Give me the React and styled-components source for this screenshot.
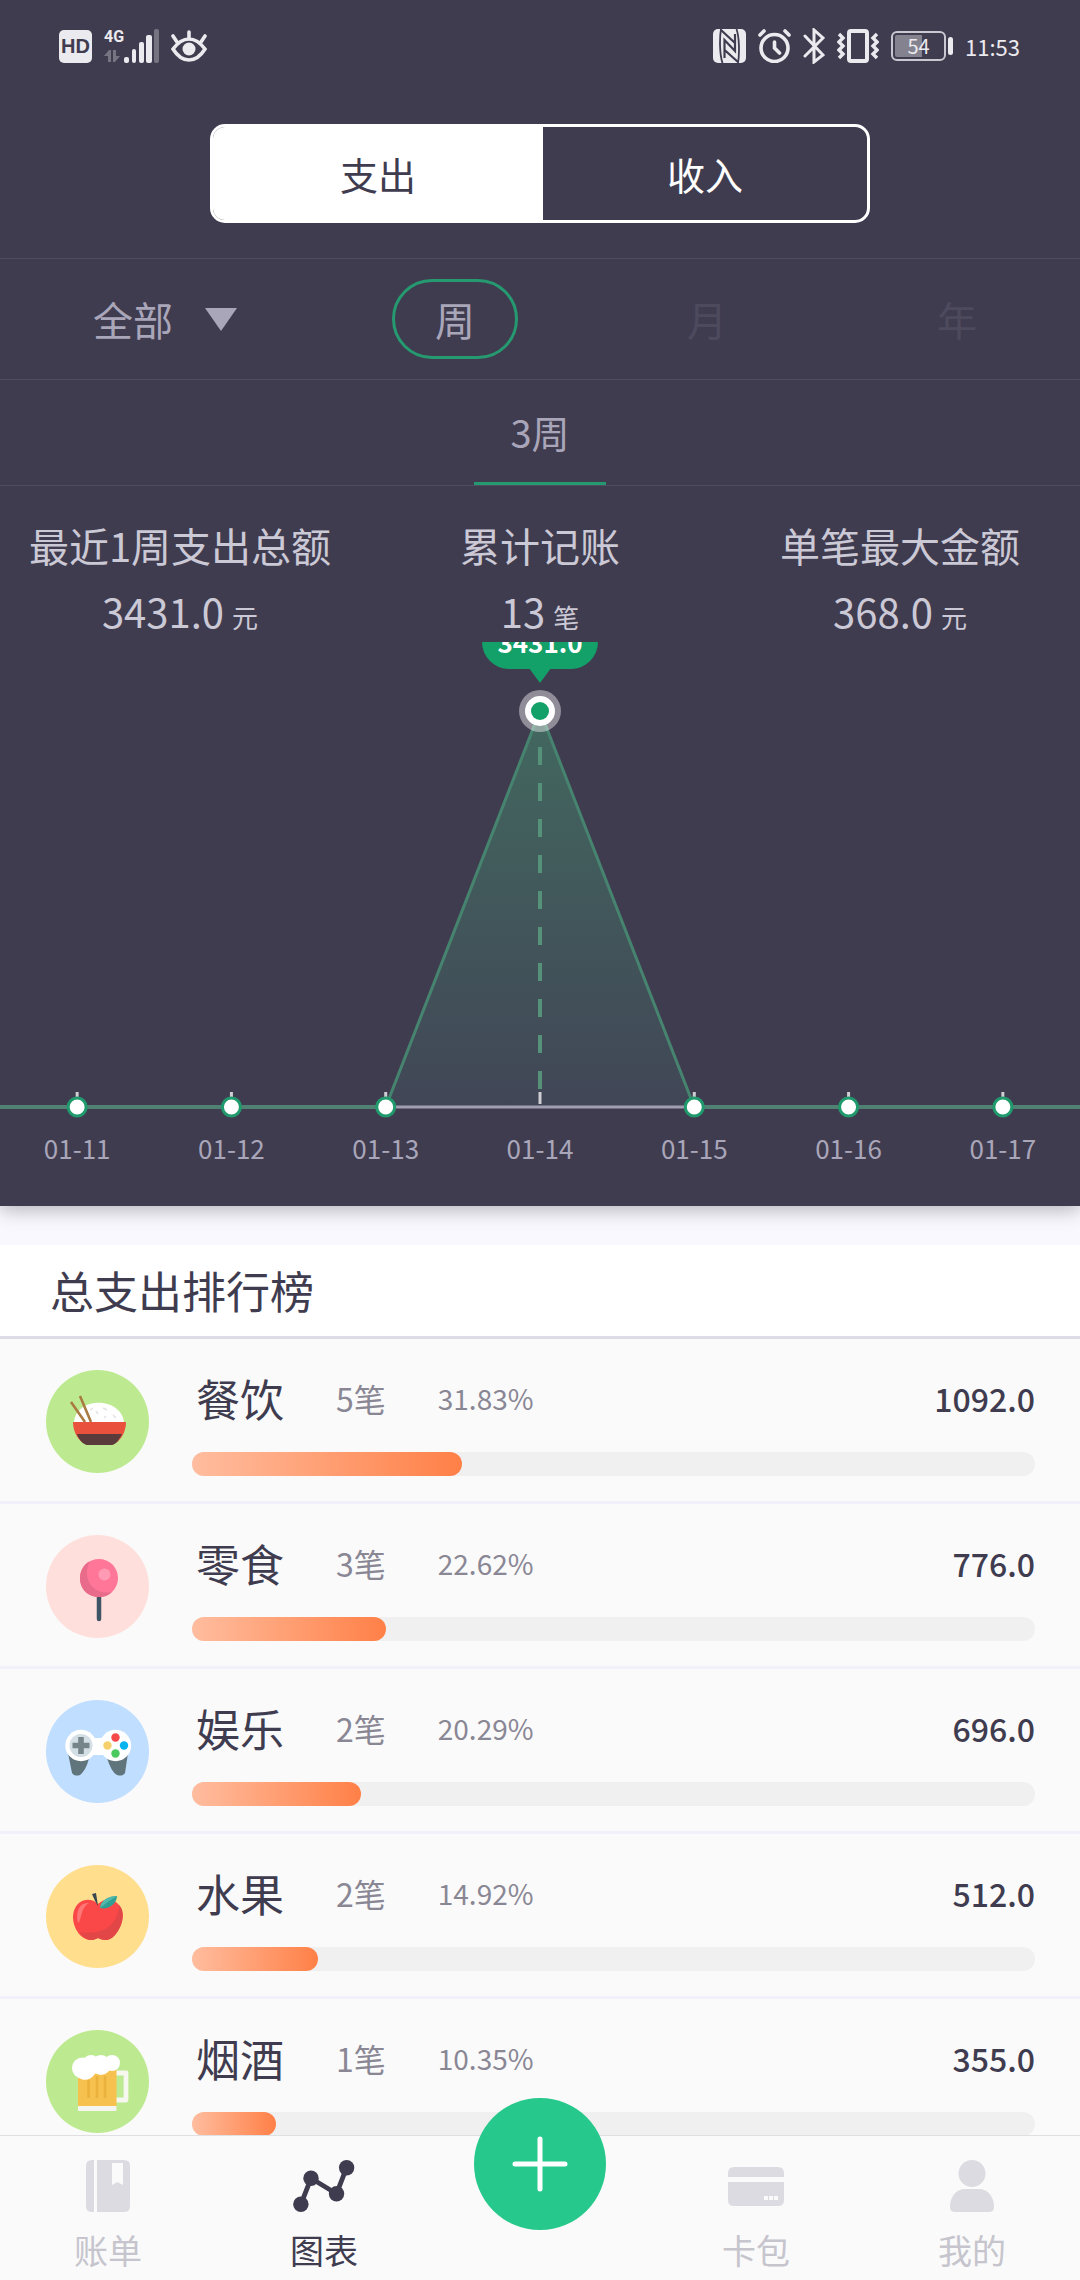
import React, { useState } from "react";
import styled, { createGlobalStyle } from "styled-components";

const ink = "#403c50";
const night = "#403c50";
const muted = "#a9a6b9";
const accent = "#13a069";

const GlobalStyle = createGlobalStyle`
  * { box-sizing: border-box; }
  body {
    margin: 0;
    background: #fafafa;
    color: ${ink};
    font-family: "Noto Sans CJK SC", sans-serif;
  }
  button, select { font: inherit; color: inherit; margin: 0; padding: 0; border: 0; background: none; }
  ul { list-style: none; margin: 0; padding: 0; }
  svg { display: block; }
`;

const Screen = styled.div`
  display: flex;
  flex-direction: column;
  height: 100vh;
`;

const Content = styled.main`
  flex: 1;
  min-height: 0;
  overflow-y: auto;
  scrollbar-width: none;
`;

const DarkPanel = styled.section`
  position: relative;
  background: ${night};
  box-shadow: 0 4px 18px rgba(0, 0, 0, 0.28);
`;

const StatusBar = styled.div`
  display: flex;
  justify-content: space-between;
  align-items: center;
  height: 92px;
  padding: 0 60px 0 59px;
  color: #ebeaee;
`;

const StatusGroup = styled.div`
  display: flex;
  align-items: center;
  gap: 12px;
`;

const HdBadge = styled.span`
  width: 33px;
  height: 33px;
  border-radius: 5px;
  background: #ebeaee;
  color: ${night};
  font: bold 20px/33px "Liberation Sans", sans-serif;
  text-align: center;
`;

const Network = styled.span`
  display: grid;
  gap: 4px;
  font: bold 16px/16px "Roboto", sans-serif;
`;

const Signal = styled.span`
  display: flex;
  align-items: flex-end;
`;

const Battery = styled.span`
  display: flex;
  align-items: center;
  gap: 2px;
  &::after {
    content: "";
    width: 5px;
    height: 18px;
    border-radius: 3px;
    background: #ebeaee;
  }
`;

const BatteryCell = styled.span`
  width: 55px;
  height: 30px;
  border: 2px solid #c9c7cf;
  border-radius: 6px;
  background: linear-gradient(90deg, #85828f 57%, transparent 57%) content-box;
  padding: 2px;
  font-size: 20px;
  line-height: 22px;
  text-align: center;
`;

const Clock = styled.time`
  font-size: 22px;
  line-height: 40px;
`;

const Toggle = styled.div`
  display: grid;
  grid-template-columns: 55fr 54fr;
  width: 62%;
  max-width: 660px;
  height: 99px;
  margin: 32px auto 35px;
  border: 3px solid #fff;
  border-radius: 15px;
  overflow: hidden;
`;

const ToggleButton = styled.button`
  font-size: 38px;
  background: ${(p) => (p.$active ? "#fff" : "transparent")};
  color: ${(p) => (p.$active ? ink : "#fff")};
`;

const FilterRow = styled.div`
  display: grid;
  grid-template-columns: 330fr 250fr 254fr 246fr;
  align-items: center;
  justify-items: center;
  height: 122px;
  border: solid #514d61;
  border-width: 1px 0;
  color: ${muted};
  font-size: 40px;
`;

const SelectLabel = styled.label`
  display: flex;
  align-items: center;
  gap: 32px;
`;

const Select = styled.select`
  appearance: none;
  outline: 0;
`;

const PeriodButton = styled.button`
  width: 126px;
  height: 80px;
  border: 3px solid ${(p) => (p.$active ? "#259a70" : "transparent")};
  border-radius: 40px;
  color: ${(p) => (p.$active ? muted : "#4e4a5e")};
`;

const TabRow = styled.div`
  display: flex;
  justify-content: center;
  height: 106px;
  border-bottom: 1px solid #514d61;
`;

const Tab = styled.button`
  width: 132px;
  border-bottom: 3px solid #259a70;
  color: ${muted};
  font-size: 38px;
`;

const Stats = styled.dl`
  display: grid;
  grid-template-columns: repeat(3, 1fr);
  height: 156px;
  margin: 0;
  padding-top: 34px;
  color: #cbc9d5;
  text-align: center;
`;

const StatLabel = styled.dt`
  font-size: 40px;
  line-height: 50px;
  white-space: nowrap;
`;

const StatValue = styled.dd`
  margin: 16px 0 0;
  font-size: 40px;
  line-height: 50px;
`;

const Unit = styled.small`
  margin-left: 8px;
  font-size: 26px;
  line-height: 30px;
`;

const Chart = styled.div`
  position: relative;
  overflow: hidden;
`;

const Plot = styled.svg`
  width: 100%;
  height: auto;
`;

const Tooltip = styled.output`
  position: absolute;
  left: 50%;
  top: -27px;
  display: grid;
  place-items: center;
  width: 116px;
  height: 54px;
  margin-left: -58px;
  border-radius: 27px;
  background: ${accent};
  color: #fff;
  font-size: 26px;
  font-weight: bold;
  line-height: 26px;
  &::after {
    content: "";
    position: absolute;
    left: 47px;
    top: 53px;
    border: solid transparent;
    border-width: 15px 11px 0;
    border-top-color: ${accent};
  }
`;

const Dates = styled.div`
  display: grid;
  grid-template-columns: repeat(7, 1fr);
  padding-bottom: 34px;
  color: ${muted};
  font-size: 26px;
  line-height: 48px;
  text-align: center;
`;

const Ranking = styled.section`
  padding-top: 39px;
  background: #faf8ff;
`;

const RankingTitle = styled.h2`
  margin: 0;
  padding: 0 50px;
  border-bottom: 3px solid #dcdbe6;
  background: #fff;
  font-size: 44px;
  font-weight: 400;
  line-height: 91px;
`;

const Row = styled.li`
  display: flex;
  align-items: flex-start;
  gap: 43px;
  height: 165px;
  padding: 31px 45px 0 46px;
  border-bottom: 3px solid #f1f0fb;
  background: #fafafa;
`;

const Badge = styled.svg`
  flex: none;
  width: 103px;
  height: 103px;
`;

const RowBody = styled.div`
  flex: 1;
`;

const RowLine = styled.div`
  display: flex;
  align-items: center;
  height: 56px;
  margin-bottom: 26px;
`;

const Name = styled.span`
  padding-left: 4px;
  margin-right: 52px;
  font-size: 44px;
`;

const Count = styled.span`
  margin-right: 52px;
  color: #8a8795;
  font-size: 32px;
`;

const Percent = styled.span`
  color: #8a8795;
  font-size: 28px;
`;

const Amount = styled.span`
  margin-left: auto;
  font-size: 32px;
  font-weight: 500;
`;

const Track = styled.div`
  height: 24px;
  border-radius: 12px;
  background: #f0f0f0;
`;

const Fill = styled.div`
  height: 100%;
  border-radius: 12px;
  background: linear-gradient(90deg, #ffbd9f, #ff8047);
`;

const Nav = styled.nav`
  position: relative;
  display: grid;
  grid-template-columns: repeat(5, 1fr);
  height: 145px;
  border-top: 1px solid #e0e0e2;
  background: #fafafa;
`;

const NavLink = styled.a`
  display: flex;
  flex-direction: column;
  align-items: center;
  padding-top: 24px;
  color: ${(p) => (p.$active ? ink : "#c6c5cd")};
  font-size: 34px;
  line-height: 50px;
  text-decoration: none;
  svg { margin-bottom: 13px; }
`;

const AddButton = styled.button`
  display: grid;
  place-items: center;
  justify-self: center;
  width: 132px;
  height: 132px;
  margin-top: -38px;
  border-radius: 50%;
  background: #26c88b;
`;

const DataArrows = () => (
  <svg width="16" height="14" viewBox="0 0 16 14" fill="#777482">
    <path d="M0 7l5-6h2v12H4V7zM9 1h3v6h4l-5 6H9z" />
  </svg>
);

const SignalBars = () => (
  <svg width="35" height="34" viewBox="0 0 35 34" fill="#ebeaee">
    <rect x="0" y="28" width="5" height="6" rx="2" />
    <rect x="8" y="20" width="4" height="14" rx="2" />
    <rect x="15" y="13" width="5" height="21" rx="2" />
    <rect x="22" y="6" width="6" height="28" rx="2" />
    <rect x="30" y="0" width="5" height="34" rx="2" fill="#777482" />
  </svg>
);

const EyeIcon = () => (
  <svg width="36" height="32" viewBox="0 0 36 32" fill="none" stroke="#ebeaee" strokeWidth="3.6" strokeLinecap="round">
    <path d="M2 19C8 11 13 9 18 9s10 2 16 10c-5 8-11 11-16 11S7 27 2 19zM18 8V2M6 12L2 6M30 12l4-6" />
    <circle cx="18" cy="19" r="6.5" fill="#ebeaee" stroke="none" />
  </svg>
);

const NfcIcon = () => (
  <svg width="33" height="34" viewBox="0 0 33 34" fill="none" stroke={night}>
    <rect width="33" height="34" rx="5" fill="#ebeaee" stroke="none" />
    <path d="M8 0C6.500 9 6.500 25 9.500 34M23.500 0C26.500 9 26.500 25 25 34" strokeWidth="1.8" />
    <path d="M8 1l14 13V5M25 33L11.500 21v8M11.500 21V11L22 22v-8" strokeWidth="2.2" />
  </svg>
);

const AlarmIcon = () => (
  <svg width="33" height="34" viewBox="0 0 33 34" fill="none" stroke="#ebeaee" strokeWidth="3.6" strokeLinecap="round">
    <circle cx="16.5" cy="19" r="13.5" />
    <path d="M16.5 13v6l5 5M2 6l4-4M31 6l-4-4" />
  </svg>
);

const BluetoothIcon = () => (
  <svg width="22" height="36" viewBox="0 0 22 36" fill="none" stroke="#ebeaee" strokeWidth="3" strokeLinecap="round">
    <path d="M2 8l18 19-9 7V2l9 8L2 28" />
  </svg>
);

const VibrateIcon = () => (
  <svg width="42" height="34" viewBox="0 0 42 34" fill="none" stroke="#ebeaee" strokeWidth="3.4">
    <rect x="12" y="2" width="18" height="30" rx="2" strokeWidth="4" />
    <path d="M2 5l4 4-4 4 4 4-4 4 4 4-4 4M40 5l-4 4 4 4-4 4 4 4-4 4 4 4" />
  </svg>
);

const BowlArt = () => (
  <>
    <circle cx="51.5" cy="51.5" r="51.5" fill="#bdea90" />
    <path d="M28 53C29 26 76 26 78 53z" fill="#fff" />
    <path d="M44 40l3-2M50 41l2 3M57 38l4 2M58 48l2-2M67 45l3 3M42 46l2 2" stroke="#e3e3e6" strokeWidth="1.5" />
    <path d="M25 32l14 20M34 26l11 26" stroke="#a97a42" strokeWidth="2.6" />
    <path d="M27 52h53c0 11-6 20-14 23H41C33 72 27 63 27 52z" fill="#e9513d" />
    <path d="M31 64h45c-3 6-6 10-10 11H41c-4-1-8-5-10-11z" fill="#593b3c" />
  </>
);

const LollipopArt = () => (
  <>
    <circle cx="51.5" cy="51.5" r="51.5" fill="#ffdfdb" />
    <path d="M53 60v24" stroke="#3f5565" strokeWidth="4.5" strokeLinecap="round" />
    <circle cx="53" cy="43" r="19" fill="#ff7698" />
    <path d="M44 26C28 34 31 63 54 62c5 0 9-2 12-5C47 61 35 43 44 26z" fill="#e96b8c" />
    <circle cx="58.5" cy="39.5" r="6" fill="#ff9ab4" />
  </>
);

const GamepadArt = () => (
  <>
    <circle cx="51.5" cy="51.5" r="51.5" fill="#c0deff" />
    <path d="M22 53l21 5c-2 9-6 15-9 17-3 1-6 1-8-2zM82 53l-21 5c3 9 6 15 10 17 3 1 6 1 8-2z" fill="#60747c" />
    <path d="M35 38h35v17H35z" fill="#fff" />
    <circle cx="35" cy="45.5" r="15.7" fill="#fff" />
    <circle cx="69.5" cy="45.5" r="15.7" fill="#fff" />
    <circle cx="35" cy="45.5" r="11.5" fill="#d3dfe4" />
    <path d="M35 37v17M26.500 45.500h17" stroke="#75858a" strokeWidth="5.600" />
    <circle cx="69.5" cy="37.5" r="4.200" fill="#f64949" />
    <circle cx="61.5" cy="45.5" r="4.200" fill="#f5d06d" />
    <circle cx="78" cy="45.5" r="4.200" fill="#09b3f0" />
    <circle cx="69.5" cy="53.5" r="4.200" fill="#4ac95f" />
  </>
);

const AppleArt = () => (
  <>
    <circle cx="51.5" cy="51.5" r="51.5" fill="#ffde8e" />
    <path d="M52 39c-5-5-13-6-19-1-9 8-7 23 1 32 6 6 12 6 18 3 6 3 12 3 17-3 8-9 11-25 2-32-6-5-14-4-19 1z" fill="#fa4747" />
    <path d="M73 40c-1 22-18 30-39 27 7 10 12 9 18 6 6 3 12 3 17-3 8-9 11-23 4-30z" fill="#e34646" />
    <path d="M43 38c-9-1-14 8-11 20 4-2 2-15 11-20z" fill="#ff7676" />
    <path d="M46 29l4-1 2 13c-2-3-4-7-6-12z" fill="#37474f" />
    <path d="M54 43c1-8 9-12 17-12 0 8-9 14-17 12z" fill="#2f9f93" />
    <path d="M54 43c1-8 9-12 17-12-5 3-11 7-17 12z" fill="#52b8ab" />
  </>
);

const BeerArt = () => (
  <>
    <circle cx="51.5" cy="51.5" r="51.5" fill="#bdea90" />
    <path d="M70 43h10v27H70" fill="none" stroke="#f6f8f0" strokeWidth="4.800" strokeLinejoin="round" />
    <path d="M32 38h38.500v39H32z" fill="#f6c14e" />
    <path d="M42.500 50v18M51 46v22M59 46v22" stroke="#eab13c" strokeWidth="2.600" />
    <path d="M32 76h38.500v4q0 1-1 1H33q-1 0-1-1z" fill="#f4f4f2" />
    <circle cx="36.5" cy="38" r="10.500" fill="#fff" />
    <circle cx="45" cy="33" r="8" fill="#fff" />
    <circle cx="55" cy="35" r="10" fill="#fff" />
    <circle cx="66" cy="33" r="8" fill="#fff" />
    <path d="M30 44c4 8 14 7 18 1l4-4-10-8z" fill="#fff" />
  </>
);

const BookIcon = () => (
  <svg width="44" height="52" viewBox="0 0 44 52" fill="#dcdbe1">
    <path d="M6 0h2v52H6q-6 0-6-6V6q0-6 6-6z" />
    <path d="M11 0h27q6 0 6 6v40q0 6-6 6H11z" />
    <path d="M26 3h11v22l-5.500-3L26 25z" fill="#fafafa" />
  </svg>
);

const TrendIcon = () => (
  <svg width="64" height="52" viewBox="0 0 64 54" fill={ink}>
    <path d="M8 46L18.500 19 45 35 55.500 8" fill="none" stroke={ink} strokeWidth="5" />
    <circle cx="8" cy="46" r="8" />
    <circle cx="18.500" cy="19" r="8" />
    <circle cx="45" cy="35" r="8" />
    <circle cx="55.500" cy="8" r="8" />
  </svg>
);

const CardIcon = () => (
  <svg width="56" height="52" viewBox="0 0 56 52" fill="#dcdbe1">
    <path d="M6 7h44q6 0 6 6v4H0v-4q0-6 6-6zM0 22h56v18q0 6-6 6H6q-6 0-6-6z" />
    <path d="M36 36h4v4h-4zM41 36h4v4h-4zM46 36h4v4h-4z" fill="#fafafa" />
  </svg>
);

const PersonIcon = () => (
  <svg width="46" height="52" viewBox="0 0 46 52" fill="#dcdbe1">
    <circle cx="23" cy="13.500" r="13.500" />
    <path d="M16 29h14c9 0 15 8 15 18 0 4-2 5-6 5H7c-4 0-6-1-6-5 0-10 6-18 15-18z" />
  </svg>
);

const dates = ["01-11", "01-12", "01-13", "01-14", "01-15", "01-16", "01-17"];
const pointX = (i) => ((i + 0.5) * 1080) / 7;

const stats = [
  { label: "最近1周支出总额", value: "3431.0", unit: "元" },
  { label: "累计记账", value: "13", unit: "笔" },
  { label: "单笔最大金额", value: "368.0", unit: "元" },
];

const categories = [
  { name: "餐饮", count: 5, percent: "31.83", amount: "1092.0", Art: BowlArt },
  { name: "零食", count: 3, percent: "22.62", amount: "776.0", Art: LollipopArt },
  { name: "娱乐", count: 2, percent: "20.29", amount: "696.0", Art: GamepadArt },
  { name: "水果", count: 2, percent: "14.92", amount: "512.0", Art: AppleArt },
  { name: "烟酒", count: 1, percent: "10.35", amount: "355.0", Art: BeerArt },
];

function TrendChart() {
  return (
    <Chart>
      <Plot viewBox="0 0 1080 482" aria-hidden="true">
        <defs>
          <linearGradient id="area" x1="0" y1="0" x2="0" y2="1">
            <stop offset="0" stopColor="#42685f" />
            <stop offset="1" stopColor="#414656" />
          </linearGradient>
        </defs>
        <path d={`M${pointX(2)} 465L540 69L${pointX(4)} 465z`} fill="url(#area)" />
        <path d="M540 105V450" stroke="#56927a" strokeWidth="4" strokeDasharray="18 18" />
        <path
          d={`M0 465H${pointX(2)}L540 69L${pointX(4)} 465H1080`}
          fill="none"
          stroke="#46846f"
          strokeWidth="3"
        />
        <path d={`M0 465H${pointX(2)}M${pointX(4)} 465H1080`} stroke="#4f8273" strokeWidth="4" />
        <path d={`M${pointX(2)} 465H${pointX(4)}`} stroke="#a19eb1" strokeWidth="3" />
        {dates.map((d, i) => (
          <path key={d} d={`M${pointX(i)} 450V462`} stroke="#cfced3" strokeWidth="3" />
        ))}
        {dates.map((d, i) =>
          i === 3 ? null : (
            <circle key={d} cx={pointX(i)} cy="465" r="9" fill="#fff" stroke="#209a6d" strokeWidth="3" />
          )
        )}
        <circle cx="540" cy="69" r="21" fill="#fff" fillOpacity="0.42" />
        <circle cx="540" cy="69" r="15" fill="#fff" />
        <circle cx="540" cy="69" r="9" fill={accent} />
      </Plot>
      <Tooltip>3431.0</Tooltip>
      <Dates>
        {dates.map((d) => (
          <time key={d}>{d}</time>
        ))}
      </Dates>
    </Chart>
  );
}

export default function App() {
  const [kind, setKind] = useState("支出");
  const [period, setPeriod] = useState("周");

  return (
    <Screen>
      <GlobalStyle />
      <Content>
        <DarkPanel>
          <StatusBar>
            <StatusGroup>
              <HdBadge>HD</HdBadge>
              <Signal>
                <Network>
                  4G
                  <DataArrows />
                </Network>
                <SignalBars />
              </Signal>
              <EyeIcon />
            </StatusGroup>
            <StatusGroup>
              <NfcIcon />
              <AlarmIcon />
              <BluetoothIcon />
              <VibrateIcon />
              <Battery>
                <BatteryCell>54</BatteryCell>
              </Battery>
              <Clock>11:53</Clock>
            </StatusGroup>
          </StatusBar>

          <Toggle>
            {["支出", "收入"].map((k) => (
              <ToggleButton key={k} $active={kind === k} aria-pressed={kind === k} onClick={() => setKind(k)}>
                {k}
              </ToggleButton>
            ))}
          </Toggle>

          <FilterRow>
            <SelectLabel>
              <Select aria-label="分类">
                <option>全部</option>
              </Select>
              <svg width="32" height="23" viewBox="0 0 32 23" fill={muted}>
                <path d="M0 0h32L16 23z" />
              </svg>
            </SelectLabel>
            {["周", "月", "年"].map((p) => (
              <PeriodButton key={p} $active={period === p} aria-pressed={period === p} onClick={() => setPeriod(p)}>
                {p}
              </PeriodButton>
            ))}
          </FilterRow>

          <TabRow>
            <Tab>3周</Tab>
          </TabRow>

          <Stats>
            {stats.map((s) => (
              <div key={s.label}>
                <StatLabel>{s.label}</StatLabel>
                <StatValue>
                  {s.value}
                  <Unit>{s.unit}</Unit>
                </StatValue>
              </div>
            ))}
          </Stats>

          <TrendChart />
        </DarkPanel>

        <Ranking>
          <RankingTitle>总支出排行榜</RankingTitle>
          <ul>
            {categories.map(({ name, count, percent, amount, Art }) => (
              <Row key={name}>
                <Badge viewBox="0 0 103 103" aria-hidden="true">
                  <Art />
                </Badge>
                <RowBody>
                  <RowLine>
                    <Name>{name}</Name>
                    <Count>{count}笔</Count>
                    <Percent>{percent}%</Percent>
                    <Amount>{amount}</Amount>
                  </RowLine>
                  <Track>
                    <Fill style={{ width: `${Math.round(percent)}%` }} />
                  </Track>
                </RowBody>
              </Row>
            ))}
          </ul>
        </Ranking>
      </Content>

      <Nav>
        <NavLink href="#bills">
          <BookIcon />
          账单
        </NavLink>
        <NavLink href="#charts" $active aria-current="page">
          <TrendIcon />
          图表
        </NavLink>
        <AddButton aria-label="记一笔">
          <svg width="56" height="56" viewBox="0 0 56 56" stroke="#fff" strokeWidth="5" strokeLinecap="round">
            <path d="M28 3v50M3 28h50" />
          </svg>
        </AddButton>
        <NavLink href="#cards">
          <CardIcon />
          卡包
        </NavLink>
        <NavLink href="#me">
          <PersonIcon />
          我的
        </NavLink>
      </Nav>
    </Screen>
  );
}
